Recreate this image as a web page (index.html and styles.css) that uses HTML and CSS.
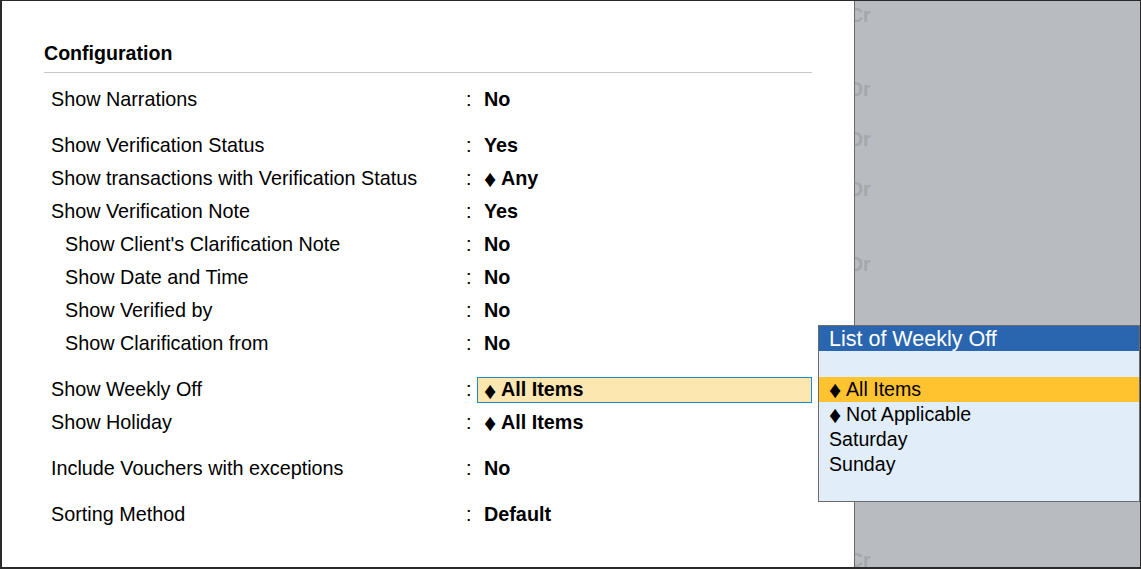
FILE: index.html
```html
<!DOCTYPE html>
<html>
<head>
<meta charset="utf-8">
<link rel="stylesheet" href="styles.css">
</head>
<body>
<div class="frame">
  <div class="panel">
    <div class="heading">Configuration</div>
    <div class="rows">
      <div class="row"><span class="label">Show Narrations</span><span class="colon">:</span><span class="value">No</span></div>
      <div class="row gap"><span class="label">Show Verification Status</span><span class="colon">:</span><span class="value">Yes</span></div>
      <div class="row"><span class="label">Show transactions with Verification Status</span><span class="colon">:</span><span class="value"><span class="dia">♦</span>Any</span></div>
      <div class="row"><span class="label">Show Verification Note</span><span class="colon">:</span><span class="value">Yes</span></div>
      <div class="row"><span class="label sub">Show Client's Clarification Note</span><span class="colon">:</span><span class="value">No</span></div>
      <div class="row"><span class="label sub">Show Date and Time</span><span class="colon">:</span><span class="value">No</span></div>
      <div class="row"><span class="label sub">Show Verified by</span><span class="colon">:</span><span class="value">No</span></div>
      <div class="row"><span class="label sub">Show Clarification from</span><span class="colon">:</span><span class="value">No</span></div>
      <div class="row gap"><span class="label">Show Weekly Off</span><span class="colon">:</span><span class="value active"><span class="dia">♦</span>All Items</span></div>
      <div class="row"><span class="label">Show Holiday</span><span class="colon">:</span><span class="value"><span class="dia">♦</span>All Items</span></div>
      <div class="row gap"><span class="label">Include Vouchers with exceptions</span><span class="colon">:</span><span class="value">No</span></div>
      <div class="row gap"><span class="label">Sorting Method</span><span class="colon">:</span><span class="value">Default</span></div>
    </div>
  </div>
  <div class="backdrop">
    <div class="ghost g1">Cr</div>
    <div class="ghost g2">Dr</div>
    <div class="ghost g3">Dr</div>
    <div class="ghost g4">Dr</div>
    <div class="ghost g5">Dr</div>
    <div class="ghost g6">Cr</div>
  </div>
  <div class="popup">
    <div class="popup-title">List of Weekly Off</div>
    <div class="popup-list">
      <div class="item selected"><span class="dia">♦</span>All Items</div>
      <div class="item"><span class="dia">♦</span>Not Applicable</div>
      <div class="item">Saturday</div>
      <div class="item">Sunday</div>
    </div>
  </div>
</div>
</body>
</html>
```
FILE: styles.css
```css
html, body {
  margin: 0;
  padding: 0;
  background: #fff;
}
body {
  font-family: "Liberation Sans", Arial, sans-serif;
  color: #000;
}
.frame {
  position: relative;
  width: 1141px;
  height: 569px;
  box-sizing: border-box;
  border-style: solid;
  border-color: #2a2a2a;
  border-width: 1px 1px 2px 2px;
  display: flex;
  overflow: hidden;
  background: #b8bcc0;
}
.panel {
  width: 853px;
  flex: none;
  box-sizing: border-box;
  background: #fff;
  border-right: 1px solid #6a6a6a;
  padding-left: 42px;
  position: relative;
  z-index: 1;
}
.heading {
  margin-top: 37px;
  width: 768px;
  height: 30px;
  line-height: 30px;
  padding-bottom: 4px;
  border-bottom: 1px solid #c8c8c8;
  font-size: 19.6px;
  font-weight: bold;
}
.rows {
  margin-top: 10px;
}
.row {
  display: grid;
  grid-template-columns: 414px 12px 335px;
  align-items: center;
  height: 33px;
  padding-left: 7px;
  font-size: 19.8px;
}
.row.gap {
  margin-top: 13px;
}
.label {
  white-space: nowrap;
}
.label.sub {
  padding-left: 14px;
}
.colon {
  padding-left: 1px;
}
.value {
  height: 26px;
  line-height: 24px;
  padding-left: 7px;
  font-weight: bold;
  box-sizing: border-box;
  white-space: nowrap;
}
.value.active {
  background: #fde7b1;
  border: 1px solid #1d8ad2;
  padding-left: 6px;
  line-height: 22px;
}
.dia {
  display: inline-block;
  width: 17px;
  font-weight: normal;
  font-size: 24px;
  line-height: 1;
  vertical-align: top;
  padding-top: 1px;
}
.backdrop {
  flex: 1;
  display: flex;
  flex-direction: column;
  margin-left: -6px;
  font-size: 19.5px;
  font-weight: bold;
  color: #a4a8ac;
}
.ghost {
  height: 24px;
  line-height: 24px;
}
.g1 { margin-top: 2px; }
.g2 { margin-top: 50px; }
.g3 { margin-top: 26px; }
.g4 { margin-top: 26px; }
.g5 { margin-top: 51px; }
.g6 { margin-top: 272px; }
.popup {
  position: absolute;
  left: 816px;
  top: 324px;
  width: 322px;
  height: 177px;
  box-sizing: border-box;
  border: 1px solid #6b6b6b;
  background: #e1eef9;
  z-index: 2;
}
.popup-title {
  height: 25px;
  line-height: 26px;
  background: #2a66b0;
  color: #fff;
  font-size: 21.5px;
  padding-left: 10px;
}
.popup-list {
  margin-top: 26px;
}
.item {
  height: 25px;
  line-height: 25px;
  padding-left: 10px;
  font-size: 19.6px;
  white-space: nowrap;
}
.item.selected {
  background: #fec32f;
}
```
